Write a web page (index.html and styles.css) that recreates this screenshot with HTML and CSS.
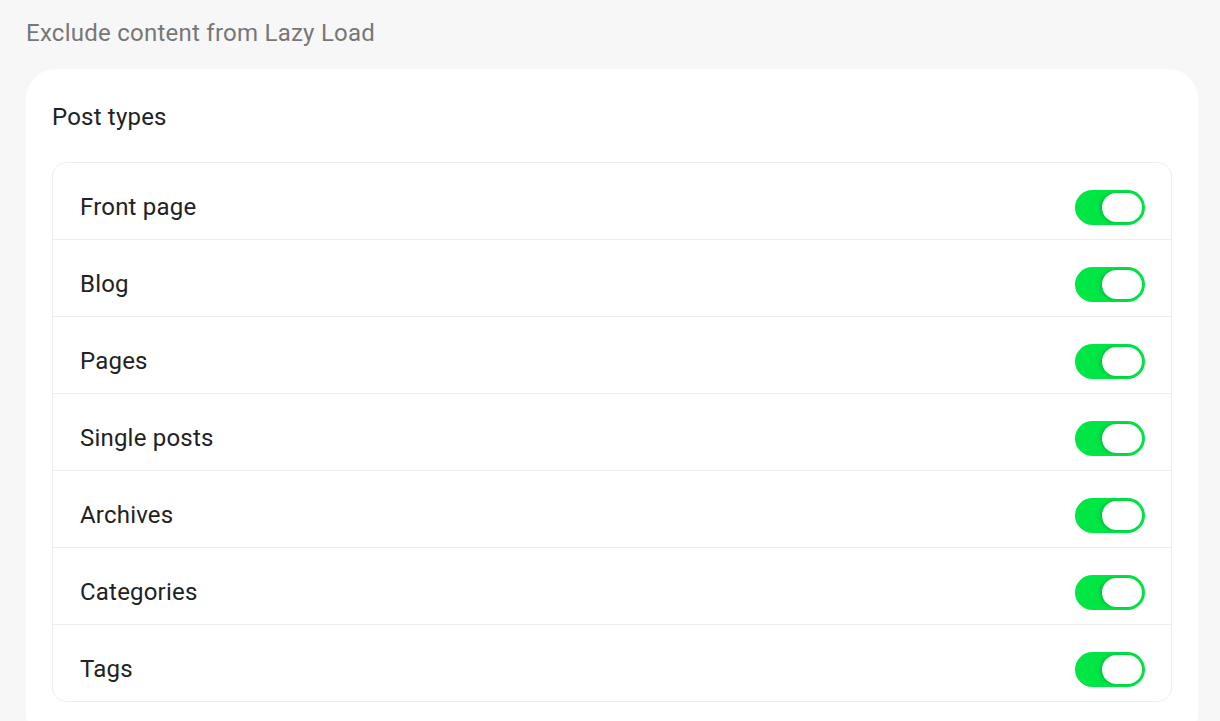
FILE: index.html
```html
<!DOCTYPE html>
<html>
<head>
<meta charset="utf-8">
<link rel="stylesheet" href="styles.css">
</head>
<body>
<div class="page">
  <h2 class="title">Exclude content from Lazy Load</h2>
  <div class="card">
    <h3 class="card-title">Post types</h3>
    <ul class="list">
      <li class="row"><span class="label">Front page</span><span class="toggle"><span class="knob"></span></span></li>
      <li class="row"><span class="label">Blog</span><span class="toggle"><span class="knob"></span></span></li>
      <li class="row"><span class="label">Pages</span><span class="toggle"><span class="knob"></span></span></li>
      <li class="row"><span class="label">Single posts</span><span class="toggle"><span class="knob"></span></span></li>
      <li class="row"><span class="label">Archives</span><span class="toggle"><span class="knob"></span></span></li>
      <li class="row"><span class="label">Categories</span><span class="toggle"><span class="knob"></span></span></li>
      <li class="row"><span class="label">Tags</span><span class="toggle"><span class="knob"></span></span></li>
    </ul>
  </div>
</div>
</body>
</html>
```
FILE: styles.css
```css
html, body {
  margin: 0;
  padding: 0;
  background: #f7f7f7;
  font-family: Roboto, "Liberation Sans", sans-serif;
  overflow: hidden;
}
.page {
  padding: 18px 22px 0 26px;
}
.title {
  margin: 0;
  font-size: 24px;
  font-weight: 400;
  color: #777;
  line-height: 30px;
  letter-spacing: 0.25px;
}
.card {
  margin-top: 21px;
  background: #fff;
  border-radius: 30px;
  padding: 33px 26px 40px 26px;
}
.card-title {
  margin: 0;
  font-size: 24px;
  font-weight: 400;
  color: #222;
  line-height: 30px;
  letter-spacing: 0.2px;
}
.list {
  list-style: none;
  margin: 30px 0 0 0;
  padding: 0;
  border: 1px solid #eeeeee;
  border-radius: 14px;
}
.row {
  display: flex;
  align-items: center;
  justify-content: space-between;
  box-sizing: border-box;
  height: 77px;
  padding: 12px 26px 0 27px;
  border-top: 1px solid #eeeeee;
}
.row:first-child {
  height: 76px;
  border-top: none;
}
.label {
  font-size: 24px;
  color: #222;
  letter-spacing: 0.2px;
}
.toggle {
  display: flex;
  align-items: center;
  justify-content: flex-end;
  width: 70px;
  height: 35px;
  box-sizing: border-box;
  padding-right: 3px;
  border-radius: 18px;
  background: #00e645;
}
.knob {
  width: 40px;
  height: 29px;
  border-radius: 15px;
  background: #fff;
  box-shadow: -2px 0 4px rgba(0, 0, 0, 0.18);
}
```
